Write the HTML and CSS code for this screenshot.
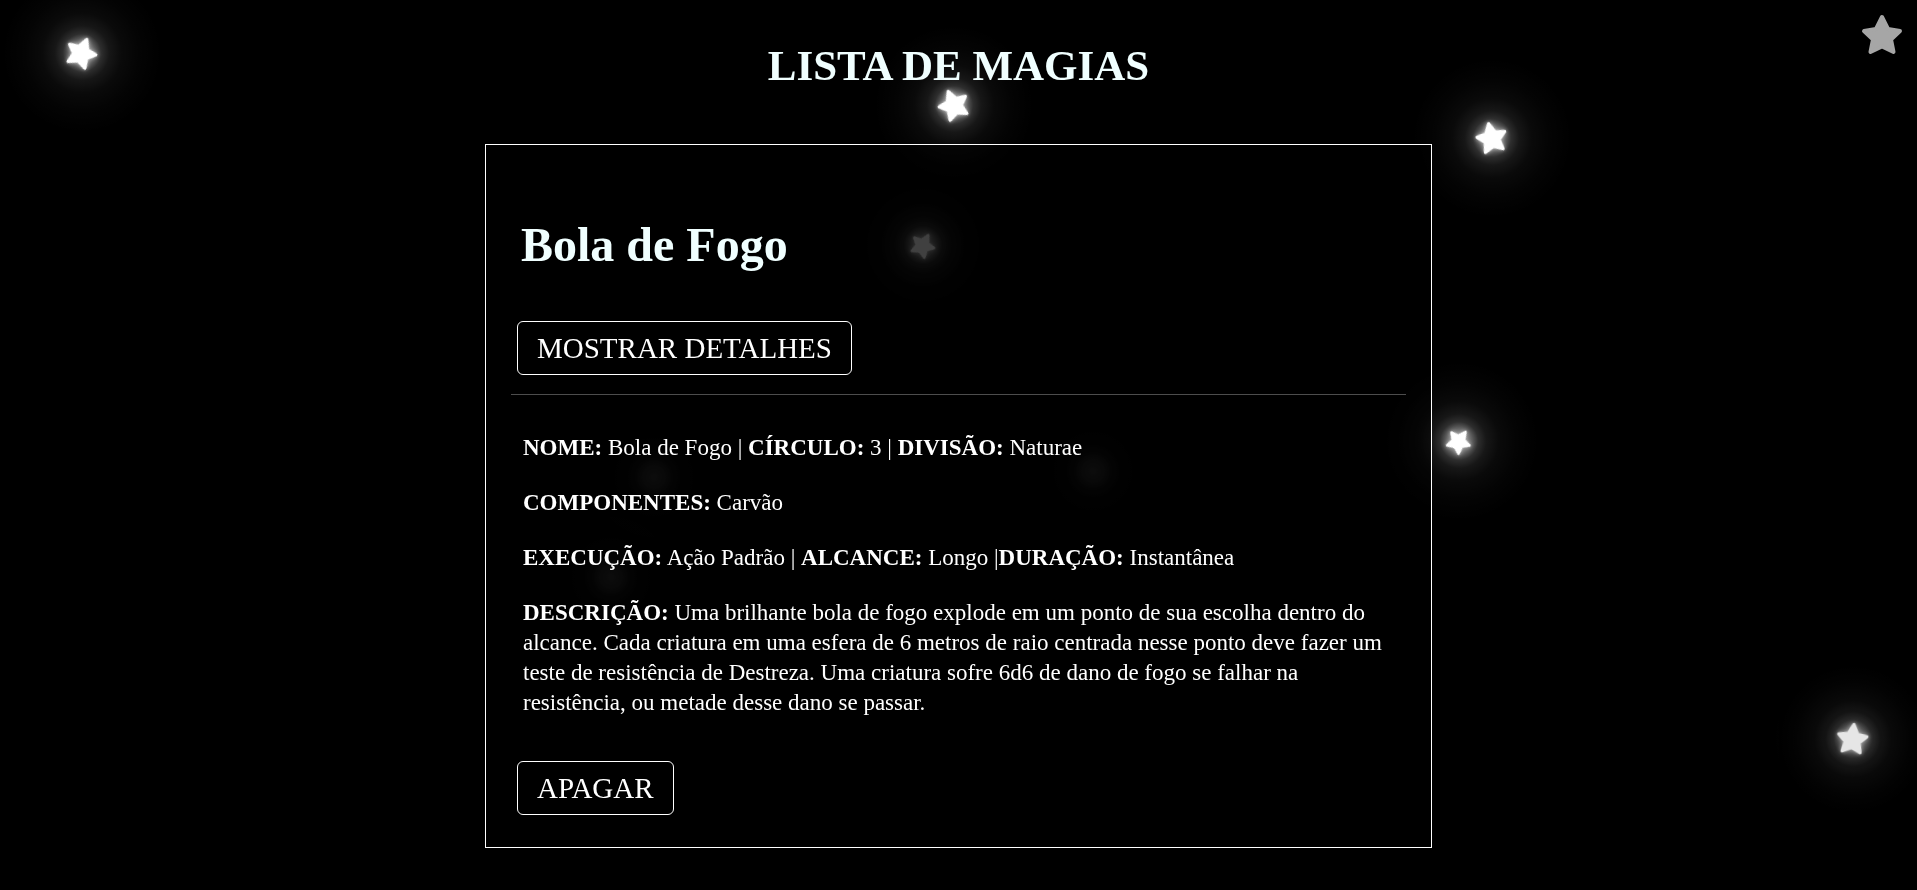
FILE: index.html
```html
<!DOCTYPE html>
<html lang="pt-BR">
<head>
<meta charset="utf-8">
<title>Lista de Magias</title>
<link rel="stylesheet" href="styles.css">
</head>
<body>
<svg class="defs" aria-hidden="true"><symbol id="star" viewBox="0 0 42 42"><path d="M21 3 L27 15 L39 17 L30 25.500 L32.500 38 L21 32.500 L9.500 38 L12 25.500 L3 17 L15 15 Z" fill="currentColor" stroke="currentColor" stroke-width="4" stroke-linejoin="round"/></symbol></svg>
<div class="sky" aria-hidden="true">
<div class="star s1"><svg><use href="#star"/></svg></div>
<div class="star s2"><svg><use href="#star"/></svg></div>
<div class="star s3"><svg><use href="#star"/></svg></div>
<div class="star s4 small"><svg><use href="#star"/></svg></div>
<div class="star s5 small"><svg><use href="#star"/></svg></div>
<div class="star s6"><svg><use href="#star"/></svg></div>
<div class="glow g1"></div><div class="glow g2"></div><div class="glow g3"></div>
</div>
<button class="corner" aria-label="Estrela"><svg><use href="#star"/></svg></button>
<main>
<h1>LISTA DE MAGIAS</h1>
<article class="card">
<h2>Bola de Fogo</h2>
<button class="btn">MOSTRAR DETALHES</button>
<hr>
<div class="details">
<p><strong>NOME:</strong> Bola de Fogo | <strong>CÍRCULO:</strong> 3 | <strong>DIVISÃO:</strong> Naturae</p>
<p><strong>COMPONENTES:</strong> Carvão</p>
<p><strong>EXECUÇÃO:</strong> Ação Padrão | <strong>ALCANCE:</strong> Longo |<strong>DURAÇÃO:</strong> Instantânea</p>
<p><strong>DESCRIÇÃO:</strong> Uma brilhante bola de fogo explode em um ponto de sua escolha dentro do alcance. Cada criatura em uma esfera de 6 metros de raio centrada nesse ponto deve fazer um teste de resistência de Destreza. Uma criatura sofre 6d6 de dano de fogo se falhar na resistência, ou metade desse dano se passar.</p>
</div>
<button class="btn">APAGAR</button>
</article>
</main>
</body>
</html>
```
FILE: styles.css
```css
* { box-sizing: border-box; }
body {
  margin: 0;
  min-height: 100vh;
  background: #000;
  color: #fff;
  font-family: "Liberation Serif", "Times New Roman", serif;
  overflow: hidden;
}
.defs { position: absolute; width: 0; height: 0; }
.sky { position: fixed; inset: 0; overflow: hidden; }
.star {
  position: absolute;
  width: 33px;
  height: 33px;
  margin: -17px 0 0 -16px;
}
.star.small { width: 26px; height: 26px; margin: -13px 0 0 -13px; }
.star svg { display: block; position: relative; width: 100%; height: 100%; filter: drop-shadow(0 0 2px #fff9); }
.star::before, .glow {
  content: "";
  position: absolute;
  width: 160px;
  height: 160px;
  left: 50%;
  top: 50%;
  margin: -80px 0 0 -80px;
  background: radial-gradient(closest-side, #fff9 0%, #fff6 15%, #ffffff2e 24%, #ffffff17 34%, #ffffff0a 50%, #ffffff04 72%, transparent);
}
.s1 { left: 81px; top: 53px; }
.s1 svg { transform: rotate(22deg); }
.s2 { left: 953px; top: 105px; }
.s2 svg { transform: rotate(-22deg); }
.s3 { left: 1491px; top: 138px; }
.s3 svg { transform: rotate(-12deg); }
.s4 { left: 923px; top: 245px; opacity: 0.42; }
.s4 svg { transform: rotate(28deg); }
.s5 { left: 1459px; top: 441px; }
.s5 svg { transform: rotate(36deg); }
.s6 { left: 1852px; top: 739px; opacity: 0.9; }
.s6 svg { transform: rotate(6deg); }
.glow { opacity: 0.14; }
.g1 { left: 654px; top: 477px; }
.g2 { left: 1093px; top: 471px; }
.g3 { left: 611px; top: 577px; }
.corner {
  position: fixed;
  z-index: 1;
  top: 14px;
  right: 14px;
  width: 42px;
  height: 42px;
  padding: 0;
  border: 0;
  background: none;
  color: #a6a6a6;
}
.corner svg { display: block; width: 100%; height: 100%; }
main {
  position: relative;
  display: flex;
  flex-direction: column;
  align-items: center;
}
h1, h2 { margin: 0; color: #f0ffff; }
h1 { margin: 42px 0 54px; font-size: 43px; line-height: 48px; }
h2 { margin: 44px 12px 45px 10px; font-size: 48px; line-height: 62px; }
.card {
  width: 49.4%;
  min-width: 400px;
  padding: 25px 25px 32px;
  border: 1px solid #fff;
  background: #0006;
}
.btn {
  display: block;
  margin-left: 6px;
  padding: 10px 19px;
  border: 1px solid #fff;
  border-radius: 6px;
  background: none;
  color: inherit;
  font: 29px/32px "Liberation Serif", "Times New Roman", serif;
}
hr { margin: 19px 0 0; border: 0; border-top: 1px solid #4d4d4d; }
.details { padding: 38px 4px 43px 12px; font-size: 23px; line-height: 30px; }
.details p { margin: 0 0 25px; }
.details p:last-child { margin: 0; }
```
